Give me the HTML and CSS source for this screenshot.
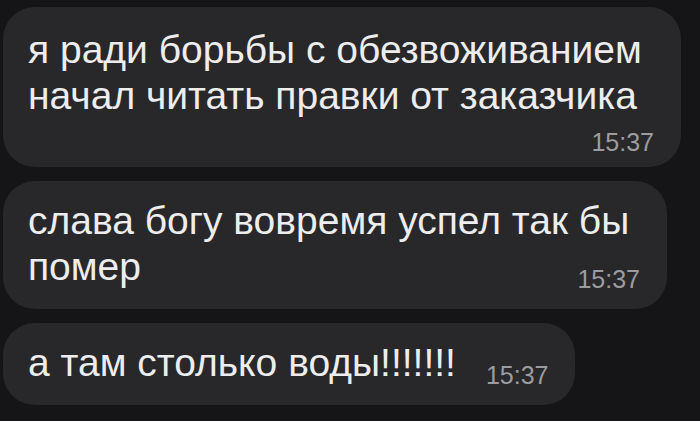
FILE: index.html
```html
<!DOCTYPE html>
<html lang="ru">
<head>
<meta charset="utf-8">
<title>Чат</title>
<link rel="stylesheet" href="styles.css">
</head>
<body>
<main class="chat">
  <div class="bubble bubble--first">
    <p class="text">я ради борьбы с обезвоживанием начал читать правки от заказчика</p>
    <div class="meta"><span class="time">15:37</span></div>
  </div>
  <div class="bubble bubble--second">
    <p class="text">слава богу вовремя успел так бы помер<span class="time time--float">15:37</span></p>
  </div>
  <div class="bubble">
    <p class="text">а там столько воды!!!!!!!<span class="time time--float">15:37</span></p>
  </div>
</main>
</body>
</html>
```
FILE: styles.css
```css
html, body {
  margin: 0;
  padding: 0;
  background: #151517;
}

body {
  width: 700px;
  height: 421px;
  overflow: hidden;
  font-family: "Liberation Sans", Arial, sans-serif;
}

.chat {
  display: flex;
  flex-direction: column;
  align-items: flex-start;
  gap: 14px;
  padding: 7px 0 0 3px;
}

.bubble {
  display: flow-root;
  box-sizing: border-box;
  max-width: 678px;
  padding: 17px 27px 16px 25px;
  background: #28282a;
  border-radius: 32px;
}

.bubble--first {
  width: 678px;
  padding-top: 20px;
  padding-bottom: 11px;
}

.bubble--second {
  width: 664px;
}

.text {
  margin: 0;
  font-size: 39px;
  line-height: 46px;
  color: #ededee;
}

.meta {
  display: flex;
  justify-content: flex-end;
  margin-top: 9px;
}

.time {
  font-size: 25px;
  line-height: 28px;
  color: #9c9ca0;
}

.time--float {
  float: right;
  margin: 21px 0 0 30px;
}
```
